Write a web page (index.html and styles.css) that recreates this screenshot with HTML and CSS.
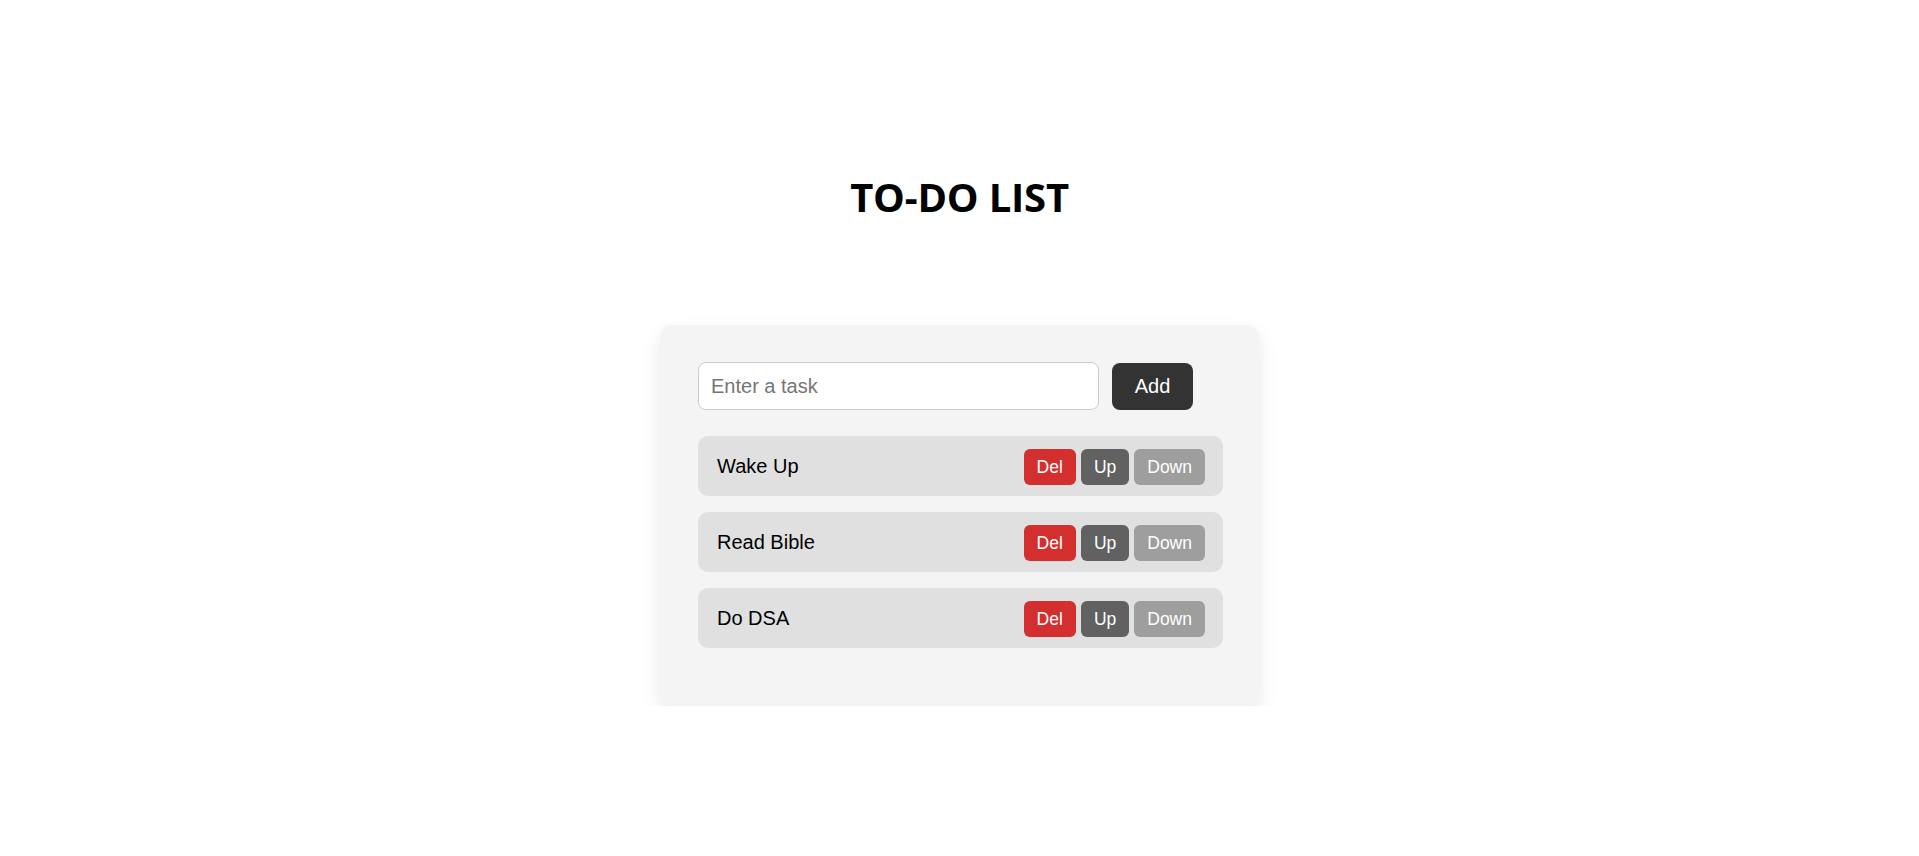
FILE: index.html
```html
<!DOCTYPE html>
<html lang="en">
<head>
<meta charset="utf-8">
<title>To-Do List</title>
<link rel="stylesheet" href="styles.css">
</head>
<body>
<main class="app">
  <h1 class="title">TO-DO LIST</h1>
  <section class="card">
    <div class="add-row">
      <input class="task-input" type="text" placeholder="Enter a task">
      <button class="add-btn">Add</button>
    </div>
    <ul class="task-list">
      <li class="task">
        <span class="task-text">Wake Up</span>
        <div class="actions">
          <button class="btn btn-del">Del</button>
          <button class="btn btn-up">Up</button>
          <button class="btn btn-down">Down</button>
        </div>
      </li>
      <li class="task">
        <span class="task-text">Read Bible</span>
        <div class="actions">
          <button class="btn btn-del">Del</button>
          <button class="btn btn-up">Up</button>
          <button class="btn btn-down">Down</button>
        </div>
      </li>
      <li class="task">
        <span class="task-text">Do DSA</span>
        <div class="actions">
          <button class="btn btn-del">Del</button>
          <button class="btn btn-up">Up</button>
          <button class="btn btn-down">Down</button>
        </div>
      </li>
    </ul>
  </section>
</main>
</body>
</html>
```

FILE: styles.css
```css
* {
  box-sizing: border-box;
}

body {
  margin: 0;
  background: #ffffff;
  font-family: "Liberation Sans", Arial, sans-serif;
  color: #000;
}

.app {
  display: flex;
  flex-direction: column;
  align-items: center;
  padding-top: 170px;
}

.title {
  margin: 0;
  font-family: "Open Sans", "Noto Sans", sans-serif;
  font-weight: 700;
  font-size: 40px;
  line-height: 54px;
  letter-spacing: -0.2px;
}

.card {
  margin-top: 101px;
  width: 599px;
  padding: 37px 36px 37px 38px;
  background: #f4f4f4;
  border-radius: 12px;
  box-shadow: 0 8px 20px rgba(0, 0, 0, 0.09);
}

.add-row {
  display: flex;
  align-items: center;
  gap: 13px;
}

.task-input {
  width: 401px;
  height: 48px;
  padding: 0 12px;
  border: 1px solid #cccccc;
  border-radius: 8px;
  background: #fff;
  font-family: "Liberation Sans", Arial, sans-serif;
  font-size: 20px;
  color: #000;
  outline: none;
}

.task-input::placeholder {
  color: #757575;
}

.add-btn {
  width: 81px;
  height: 47px;
  border: none;
  border-radius: 8px;
  background: #333333;
  color: #fff;
  font-family: "Liberation Sans", Arial, sans-serif;
  font-size: 20px;
  padding: 0;
}

.task-list {
  list-style: none;
  margin: 26px 0 21px;
  padding: 0;
  display: flex;
  flex-direction: column;
  gap: 16px;
}

.task {
  display: flex;
  align-items: center;
  justify-content: space-between;
  height: 60px;
  padding: 0 18px 0 19px;
  background: #e0e0e0;
  border-radius: 10px;
  font-size: 20px;
}

.actions {
  display: flex;
  gap: 5px;
  margin-top: 2px;
}

.btn {
  height: 36px;
  padding: 0 13px;
  border: none;
  border-radius: 6px;
  color: #fff;
  font-family: "Liberation Sans", Arial, sans-serif;
  font-size: 17.5px;
}

.btn-del {
  background: #d32f2f;
}

.btn-up {
  background: #616161;
}

.btn-down {
  background: #9e9e9e;
}
```
